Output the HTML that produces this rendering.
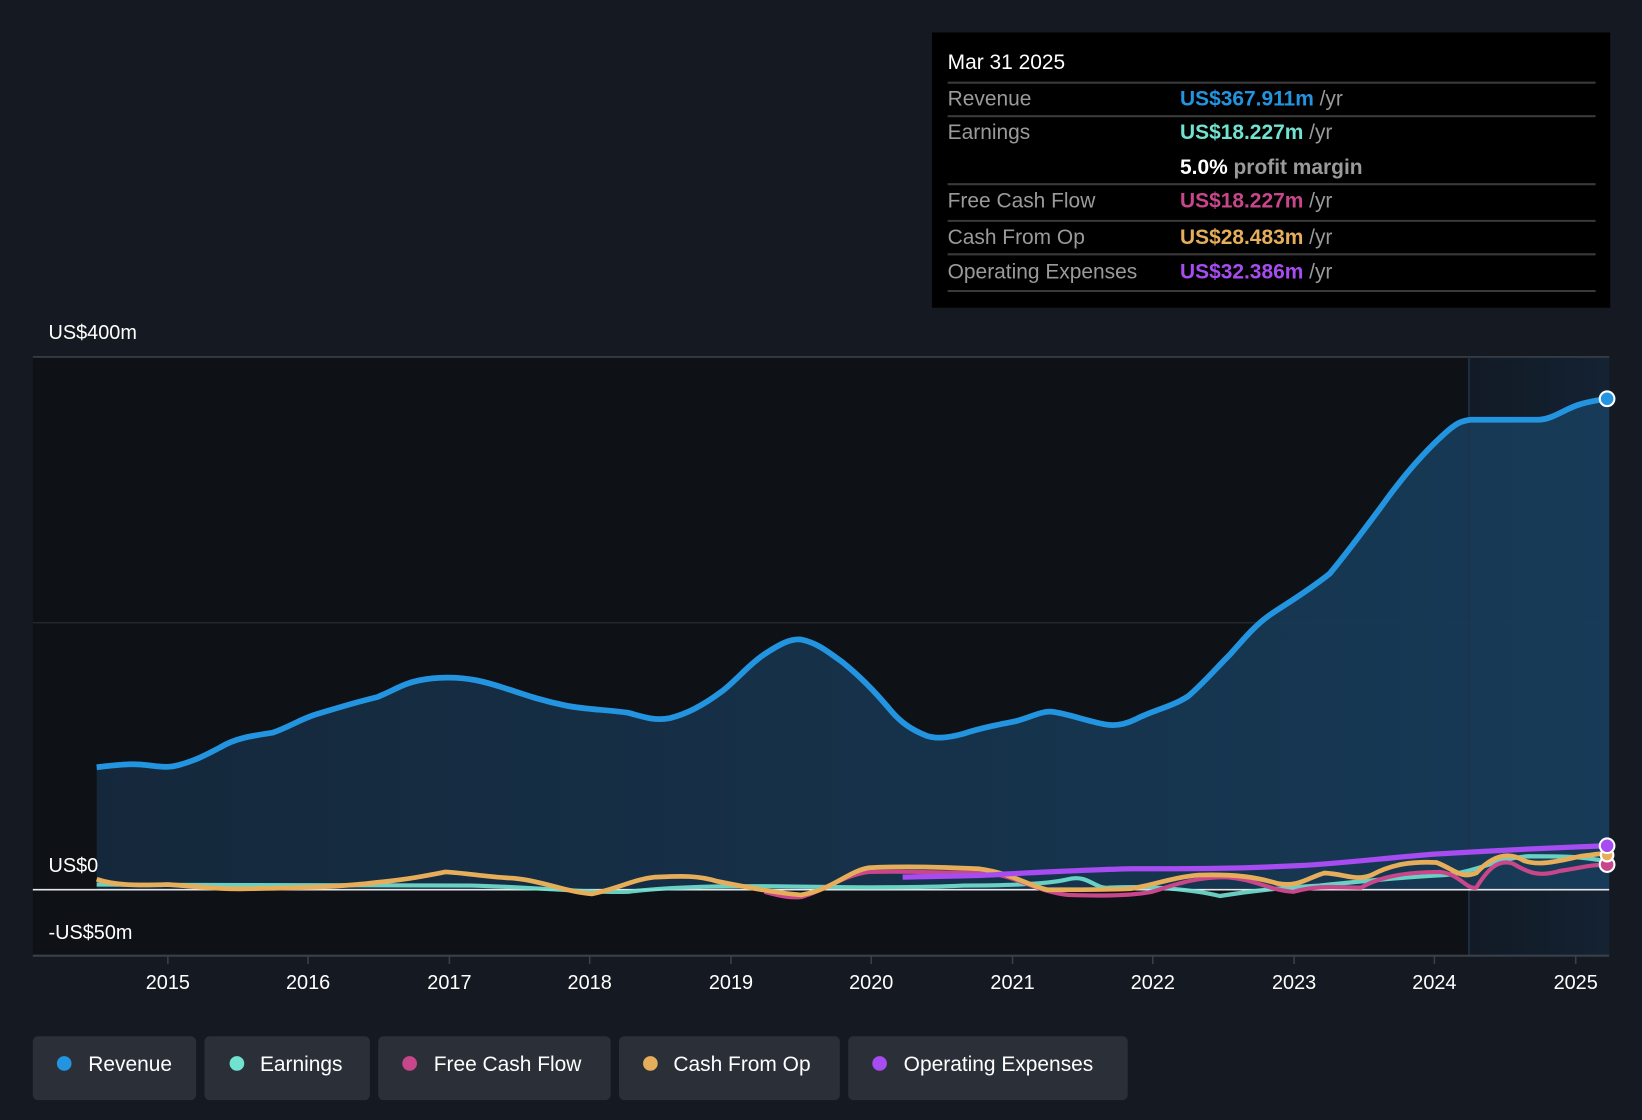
<!DOCTYPE html>
<html><head><meta charset="utf-8"><style>
html,body{margin:0;padding:0;background:#151a22;}
svg{display:block}
text{font-family:"Liberation Sans",sans-serif}
</style></head><body>
<svg width="1642" height="1120" viewBox="0 0 1568 1070" xmlns="http://www.w3.org/2000/svg">
<defs>
<linearGradient id="rev" x1="0" y1="0" x2="1" y2="0">
<stop offset="0" stop-color="#15293d"/><stop offset="1" stop-color="#173c5a"/>
</linearGradient>
<linearGradient id="hl" x1="0" y1="0" x2="1" y2="0">
<stop offset="0" stop-color="#121a25"/><stop offset="1" stop-color="#142233"/>
</linearGradient>
</defs>
<rect width="1568" height="1070" fill="#151a22"/>
<rect x="31" y="341" width="1372" height="572" fill="#0e1116"/>
<rect x="1403" y="341" width="134" height="572" fill="url(#hl)"/>
<line x1="31" y1="341" x2="1537" y2="341" stroke="#3a4049" stroke-width="1.5"/>
<line x1="31" y1="595" x2="1537" y2="595" stroke="#2a3038" stroke-width="1"/>
<path d="M92,733 C110,731 125,729 140,731 C150,732 160,734 170,731 C185,727 195,722 210,714 C225,705 240,703 260,700 C275,695 285,688 300,683 C320,677 335,672 360,666 C375,660 385,653 400,650 C415,647 435,646 455,650 C470,653 480,657 490,660 C505,665 520,670 540,674 C560,678 580,678 600,681 C615,685 625,689 640,686 C655,682 670,675 690,660 C705,648 715,635 730,625 C745,615 755,610 765,611 C780,614 790,622 805,633 C820,645 835,660 850,678 C860,690 870,697 885,703 C895,706 905,705 920,701 C935,696 950,693 970,689 C985,685 995,679 1005,680 C1020,682 1035,688 1055,692 C1065,694 1075,692 1085,687 C1100,679 1120,675 1135,665 C1150,652 1160,640 1175,625 C1190,608 1200,596 1215,586 C1230,576 1250,564 1270,548 C1285,530 1300,510 1320,483 C1340,455 1360,432 1380,414 C1390,405 1395,402 1405,401 L1470,401 C1485,400 1495,390 1510,386 C1520,383 1528,382 1535,381 L1537,381 L1537,850 L92,850 Z" fill="url(#rev)" opacity="0.95"/>
<line x1="1403" y1="341" x2="1403" y2="913" stroke="#1f3346" stroke-width="1.5"/>
<line x1="31" y1="850" x2="1537" y2="850" stroke="#e8e8e8" stroke-width="1.5"/>
<path d="M92,845 C200,846 300,845 450,846 C520,848 560,853 600,852 C640,847 700,846 760,847 C820,848 880,848 920,846 C960,846 1000,845 1020,840 C1040,835 1045,850 1060,848 C1100,846 1140,850 1165,856 C1190,852 1220,848 1260,846 C1300,842 1340,838 1380,836 C1410,833 1430,820 1460,818 C1490,818 1510,818 1535,823" fill="none" stroke="#72e2d0" stroke-width="4" opacity="0.9"/>
<path d="M730,852 C745,856 755,858 765,857 C785,852 805,836 830,833 C870,832 900,834 940,834 C970,836 990,852 1020,855 C1050,856 1080,856 1100,852 C1120,846 1140,838 1170,838 C1200,840 1210,850 1235,852 C1260,845 1280,848 1300,848 C1320,836 1350,833 1375,833 C1395,835 1400,850 1410,848 C1420,832 1430,820 1445,825 C1460,834 1470,838 1490,832 C1510,829 1520,826 1535,826" fill="none" stroke="#c8468a" stroke-width="4"/>
<path d="M92,840 C110,846 130,846 160,845 C190,847 210,850 240,849 C290,848 330,847 360,843 C390,840 405,837 425,833 C445,834 465,838 490,839 C520,842 540,852 565,854 C590,849 605,840 625,838 C650,837 665,836 685,842 C710,847 740,853 765,855 C795,850 810,832 830,829 C870,827 910,829 935,830 C965,834 980,845 1000,850 C1030,850 1060,850 1080,849 C1100,846 1120,838 1145,836 C1180,835 1200,838 1220,844 C1240,848 1250,838 1265,834 C1285,835 1295,842 1310,836 C1330,825 1350,823 1372,824 C1390,831 1395,840 1410,834 C1425,818 1440,813 1455,822 C1470,828 1490,822 1510,818 C1520,817 1530,815 1535,815" fill="none" stroke="#e6ae5a" stroke-width="4.5"/>
<path d="M862,838 C900,837 940,837 960,835 C1000,833 1040,831 1080,830 C1140,830 1180,830 1240,827 C1280,825 1320,820 1370,816 C1420,813 1480,810 1535,808" fill="none" stroke="#a64cf0" stroke-width="5"/>
<path d="M92,733 C110,731 125,729 140,731 C150,732 160,734 170,731 C185,727 195,722 210,714 C225,705 240,703 260,700 C275,695 285,688 300,683 C320,677 335,672 360,666 C375,660 385,653 400,650 C415,647 435,646 455,650 C470,653 480,657 490,660 C505,665 520,670 540,674 C560,678 580,678 600,681 C615,685 625,689 640,686 C655,682 670,675 690,660 C705,648 715,635 730,625 C745,615 755,610 765,611 C780,614 790,622 805,633 C820,645 835,660 850,678 C860,690 870,697 885,703 C895,706 905,705 920,701 C935,696 950,693 970,689 C985,685 995,679 1005,680 C1020,682 1035,688 1055,692 C1065,694 1075,692 1085,687 C1100,679 1120,675 1135,665 C1150,652 1160,640 1175,625 C1190,608 1200,596 1215,586 C1230,576 1250,564 1270,548 C1285,530 1300,510 1320,483 C1340,455 1360,432 1380,414 C1390,405 1395,402 1405,401 L1470,401 C1485,400 1495,390 1510,386 C1520,383 1528,382 1535,381" fill="none" stroke="#2394e0" stroke-width="5.5"/>
<circle cx="1535" cy="381" r="7" fill="#2394e0" stroke="#fff" stroke-width="2"/>
<circle cx="1535" cy="826" r="7" fill="#c8468a" stroke="#fff" stroke-width="2"/>
<circle cx="1535" cy="817" r="6" fill="#e6ae5a" stroke="#fff" stroke-width="2"/>
<circle cx="1535" cy="808" r="7" fill="#a64cf0" stroke="#fff" stroke-width="2"/>
<line x1="31" y1="913" x2="1537" y2="913" stroke="#3a4049" stroke-width="2"/>
<g stroke="#3a4049" stroke-width="1.5">
<line x1="160" y1="913" x2="160" y2="921"/><line x1="294" y1="913" x2="294" y2="921"/><line x1="429" y1="913" x2="429" y2="921"/><line x1="563" y1="913" x2="563" y2="921"/><line x1="698" y1="913" x2="698" y2="921"/><line x1="832" y1="913" x2="832" y2="921"/><line x1="967" y1="913" x2="967" y2="921"/><line x1="1101" y1="913" x2="1101" y2="921"/><line x1="1236" y1="913" x2="1236" y2="921"/><line x1="1370" y1="913" x2="1370" y2="921"/><line x1="1505" y1="913" x2="1505" y2="921"/>
</g>
<g fill="#fff" font-size="19" text-anchor="middle">
<text x="160" y="945">2015</text><text x="294" y="945">2016</text><text x="429" y="945">2017</text><text x="563" y="945">2018</text><text x="698" y="945">2019</text><text x="832" y="945">2020</text><text x="967" y="945">2021</text><text x="1101" y="945">2022</text><text x="1236" y="945">2023</text><text x="1370" y="945">2024</text><text x="1505" y="945">2025</text>
</g>
<g fill="#fff" font-size="19">
<text x="46" y="324">US$400m</text>
<text x="46" y="833">US$0</text>
<text x="46" y="897">-US$50m</text>
</g>
<rect x="890" y="31" width="648" height="263" fill="#000"/>
<g stroke="#3a3a3a" stroke-width="2">
<line x1="905" y1="79" x2="1524" y2="79"/><line x1="905" y1="111" x2="1524" y2="111"/><line x1="905" y1="176" x2="1524" y2="176"/><line x1="905" y1="211" x2="1524" y2="211"/><line x1="905" y1="243" x2="1524" y2="243"/><line x1="905" y1="278" x2="1524" y2="278"/>
</g>
<g font-size="20">
<text x="905" y="66" fill="#fff">Mar 31 2025</text>
<text x="905" y="101" fill="#9a9a9a">Revenue</text>
<text x="905" y="133" fill="#9a9a9a">Earnings</text>
<text x="905" y="198" fill="#9a9a9a">Free Cash Flow</text>
<text x="905" y="233" fill="#9a9a9a">Cash From Op</text>
<text x="905" y="266" fill="#9a9a9a">Operating Expenses</text>
<text x="1127" y="101" font-weight="bold"><tspan fill="#2394e0">US$367.911m</tspan><tspan fill="#9a9a9a" font-weight="normal"> /yr</tspan></text>
<text x="1127" y="133" font-weight="bold"><tspan fill="#72e2d0">US$18.227m</tspan><tspan fill="#9a9a9a" font-weight="normal"> /yr</tspan></text>
<text x="1127" y="166" font-weight="bold"><tspan fill="#fff">5.0%</tspan><tspan fill="#9a9a9a"> profit margin</tspan></text>
<text x="1127" y="198" font-weight="bold"><tspan fill="#c8468a">US$18.227m</tspan><tspan fill="#9a9a9a" font-weight="normal"> /yr</tspan></text>
<text x="1127" y="233" font-weight="bold"><tspan fill="#e6ae5a">US$28.483m</tspan><tspan fill="#9a9a9a" font-weight="normal"> /yr</tspan></text>
<text x="1127" y="266" font-weight="bold"><tspan fill="#a64cf0">US$32.386m</tspan><tspan fill="#9a9a9a" font-weight="normal"> /yr</tspan></text>
</g>
<g fill="#2b2f38">
<rect x="31" y="990" width="156" height="61" rx="5"/>
<rect x="195" y="990" width="158" height="61" rx="5"/>
<rect x="361" y="990" width="222" height="61" rx="5"/>
<rect x="591" y="990" width="211" height="61" rx="5"/>
<rect x="810" y="990" width="267" height="61" rx="5"/>
</g>
<circle cx="61" cy="1016" r="7" fill="#2394e0"/>
<circle cx="226" cy="1016" r="7" fill="#72e2d0"/>
<circle cx="391" cy="1016" r="7" fill="#c8468a"/>
<circle cx="621" cy="1016" r="7" fill="#e6ae5a"/>
<circle cx="840" cy="1016" r="7" fill="#a64cf0"/>
<g fill="#fff" font-size="20">
<text x="84" y="1023">Revenue</text>
<text x="248" y="1023">Earnings</text>
<text x="414" y="1023">Free Cash Flow</text>
<text x="643" y="1023">Cash From Op</text>
<text x="863" y="1023">Operating Expenses</text>
</g>
</svg>
</body></html>
